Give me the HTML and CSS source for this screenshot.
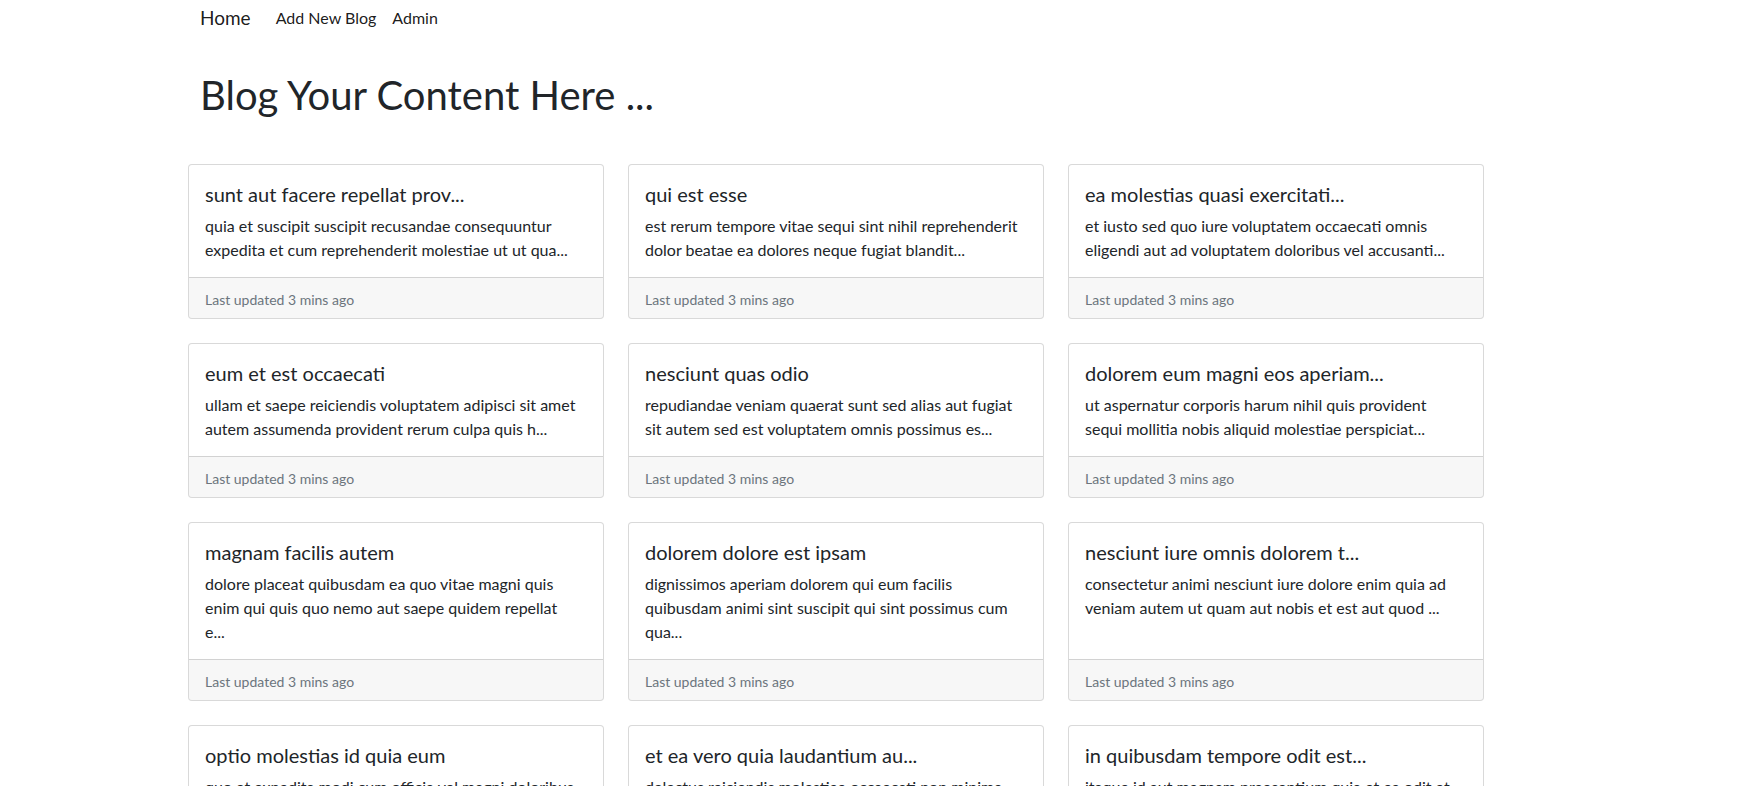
FILE: index.html
```html
<!DOCTYPE html>
<html lang="en">
<head>
<meta charset="utf-8">
<title>Blog</title>
<link rel="stylesheet" href="styles.css">
</head>
<body>
<div class="page">
  <nav class="navbar">
    <a class="brand" href="#">Home</a>
    <a class="nav-link" href="#">Add New Blog</a>
    <a class="nav-link" href="#">Admin</a>
  </nav>
  <h1 class="title">Blog Your Content Here ...</h1>
  <div class="grid">
    <div class="card"><div class="card-body"><h5 class="card-title">sunt aut facere repellat prov...</h5><p class="card-text">quia et suscipit suscipit recusandae consequuntur expedita et cum reprehenderit molestiae ut ut qua...</p></div><div class="card-footer">Last updated 3 mins ago</div></div>
    <div class="card"><div class="card-body"><h5 class="card-title">qui est esse</h5><p class="card-text">est rerum tempore vitae sequi sint nihil reprehenderit dolor beatae ea dolores neque fugiat blandit...</p></div><div class="card-footer">Last updated 3 mins ago</div></div>
    <div class="card"><div class="card-body"><h5 class="card-title">ea molestias quasi exercitati...</h5><p class="card-text">et iusto sed quo iure voluptatem occaecati omnis eligendi aut ad voluptatem doloribus vel accusanti...</p></div><div class="card-footer">Last updated 3 mins ago</div></div>
    <div class="card"><div class="card-body"><h5 class="card-title">eum et est occaecati</h5><p class="card-text">ullam et saepe reiciendis voluptatem adipisci sit amet autem assumenda provident rerum culpa quis h...</p></div><div class="card-footer">Last updated 3 mins ago</div></div>
    <div class="card"><div class="card-body"><h5 class="card-title">nesciunt quas odio</h5><p class="card-text">repudiandae veniam quaerat sunt sed alias aut fugiat sit autem sed est voluptatem omnis possimus es...</p></div><div class="card-footer">Last updated 3 mins ago</div></div>
    <div class="card"><div class="card-body"><h5 class="card-title">dolorem eum magni eos aperiam...</h5><p class="card-text">ut aspernatur corporis harum nihil quis provident sequi mollitia nobis aliquid molestiae perspiciat...</p></div><div class="card-footer">Last updated 3 mins ago</div></div>
    <div class="card"><div class="card-body"><h5 class="card-title">magnam facilis autem</h5><p class="card-text">dolore placeat quibusdam ea quo vitae magni quis enim qui quis quo nemo aut saepe quidem repellat e...</p></div><div class="card-footer">Last updated 3 mins ago</div></div>
    <div class="card"><div class="card-body"><h5 class="card-title">dolorem dolore est ipsam</h5><p class="card-text">dignissimos aperiam dolorem qui eum facilis quibusdam animi sint suscipit qui sint possimus cum qua...</p></div><div class="card-footer">Last updated 3 mins ago</div></div>
    <div class="card"><div class="card-body"><h5 class="card-title">nesciunt iure omnis dolorem t...</h5><p class="card-text">consectetur animi nesciunt iure dolore enim quia ad veniam autem ut quam aut nobis et est aut quod ...</p></div><div class="card-footer">Last updated 3 mins ago</div></div>
    <div class="card"><div class="card-body"><h5 class="card-title">optio molestias id quia eum</h5><p class="card-text">quo et expedita modi cum officia vel magni doloribus qui repudiandae vero nisi sit quos ...</p></div><div class="card-footer">Last updated 3 mins ago</div></div>
    <div class="card"><div class="card-body"><h5 class="card-title">et ea vero quia laudantium au...</h5><p class="card-text">delectus reiciendis molestiae occaecati non minima eveniet qui voluptatibus accusamus...</p></div><div class="card-footer">Last updated 3 mins ago</div></div>
    <div class="card"><div class="card-body"><h5 class="card-title">in quibusdam tempore odit est...</h5><p class="card-text">itaque id aut magnam praesentium quia et ea odit et ea voluptas et sapiente quia...</p></div><div class="card-footer">Last updated 3 mins ago</div></div>
  </div>
</div>
</body>
</html>
```
FILE: styles.css
```css
* { box-sizing: border-box; }
html, body { margin: 0; padding: 0; background: #fff; }
body {
  font-family: Lato, "Liberation Sans", sans-serif;
  font-size: 16px;
  line-height: 1.5;
  color: #212529;
}
a { text-decoration: none; }
.page {
  width: 1296px;
  margin-left: 188px;
}
.navbar {
  display: flex;
  align-items: center;
  padding: 2px 0 0 12px;
  height: 33px;
}
.brand {
  font-size: 19px;
  line-height: 30px;
  color: rgba(0, 0, 0, 0.9);
  margin-right: 17px;
}
.nav-link {
  font-size: 16px;
  line-height: 24px;
  color: rgba(0, 0, 0, 0.9);
  padding: 0 8px;
}
.title {
  margin: 38px 0 45px;
  padding-left: 12px;
  font-size: 40px;
  line-height: 48px;
  font-weight: 400;
  color: #212529;
}
.grid {
  display: grid;
  grid-template-columns: repeat(3, 416px);
  gap: 24px;
}
.card {
  display: flex;
  flex-direction: column;
  border: 1px solid rgba(0, 0, 0, 0.15);
  border-radius: 4px;
  background: #fff;
  overflow: hidden;
}
.card-body {
  flex: 1;
  padding: 17px 24.5px 15px 16px;
}
.card-title {
  margin: 0 0 8px;
  font-size: 20px;
  line-height: 24px;
  font-weight: 400;
}
.card-text {
  margin: 0;
  font-size: 16px;
  line-height: 24px;
}
.card-footer {
  border-top: 1px solid rgba(0, 0, 0, 0.15);
  background: rgba(0, 0, 0, 0.03);
  padding: 11px 16px 8px;
  font-size: 14px;
  line-height: 21px;
  color: #6c757d;
}
```
